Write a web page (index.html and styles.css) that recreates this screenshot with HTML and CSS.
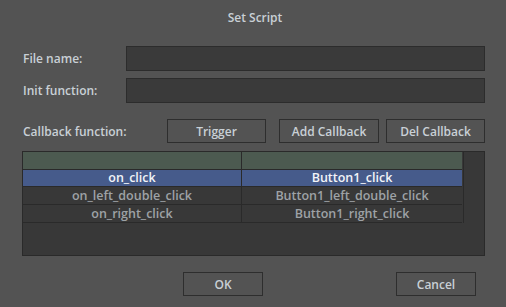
FILE: index.html
```html
<!DOCTYPE html>
<html>
<head>
<meta charset="utf-8">
<link rel="stylesheet" href="styles.css">
</head>
<body>
<div class="dialog">
  <div class="title">Set Script</div>
  <div class="row first">
    <span class="label">File name:</span>
    <div class="field"></div>
  </div>
  <div class="row second">
    <span class="label">Init function:</span>
    <div class="field"></div>
  </div>
  <div class="row cb">
    <span class="label cblabel">Callback function:</span>
    <button class="btn trigger">Trigger</button>
    <button class="btn add">Add Callback</button>
    <button class="btn del">Del Callback</button>
  </div>
  <div class="table">
    <div class="grid">
      <div class="cell head"></div><div class="cell head"></div>
      <div class="cell sel">on_click</div><div class="cell sel">Button1_click</div>
      <div class="cell">on_left_double_click</div><div class="cell">Button1_left_double_click</div>
      <div class="cell">on_right_click</div><div class="cell">Button1_right_click</div>
    </div>
  </div>
  <div class="footer">
    <button class="btn ok">OK</button>
    <button class="btn cancel">Cancel</button>
  </div>
</div>
</body>
</html>
```
FILE: styles.css
```css
html, body {
  margin: 0;
  padding: 0;
  background: #535353;
}
.dialog {
  width: 506px;
  height: 307px;
  box-sizing: border-box;
  padding: 9px 21px 0 23px;
  font-family: "Open Sans", "Noto Sans", sans-serif;
  font-size: 12px;
  font-weight: 600;
  color: #c9d0d6;
  display: flex;
  flex-direction: column;
}
.title {
  text-align: center;
  height: 17px;
  line-height: 17px;
  margin-left: 2px;
}
.row {
  display: flex;
  align-items: center;
}
.row.first { margin-top: 20px; }
.row.second { margin-top: 7px; }
.label {
  width: 103px;
}
.field {
  flex: 1;
  height: 23px;
  background: #3a3a3a;
  border: 1px solid #2c2c2c;
}
.row.cb { margin-top: 16px; }
.cblabel { width: 144px; }
.btn {
  font: inherit;
  color: #c9d0d6;
  background: #535353;
  border: 1px solid #2e2e2e;
  height: 24px;
  padding: 0;
  box-sizing: border-box;
}
.trigger { width: 99px; }
.add { width: 100px; margin-left: 13px; }
.del { width: 99px; margin-left: 7px; }
.table {
  margin-top: 8px;
  margin-left: -1px;
  height: 105px;
  box-sizing: border-box;
  background: #383838;
  border: 1px solid #2a2a2a;
  padding-right: 21px;
}
.grid {
  display: grid;
  grid-template-columns: 219px 220px;
  grid-template-rows: 18px 17px 18px 18px;
  border-right: 1px solid #2a2a2a;
  width: 441px;
  box-sizing: border-box;
}
.cell {
  border-bottom: 1px solid #2a2a2a;
  text-align: center;
  line-height: 17px;
  font-size: 12.5px;
  color: #9ea2a6;
  font-weight: 600;
  overflow: hidden;
  white-space: nowrap;
}
.cell:nth-child(odd) { border-right: 1px solid #2a2a2a; }
.cell.head { background: #4c5a50; }
.cell.sel { background: #465b8b; color: #f2f4f8; line-height: 16px; }
.footer {
  display: flex;
  margin-top: 16px;
}
.ok { width: 80px; margin-left: 160px; height: 24px; }
.cancel { width: 80px; margin-left: 133px; height: 24px; }
```
